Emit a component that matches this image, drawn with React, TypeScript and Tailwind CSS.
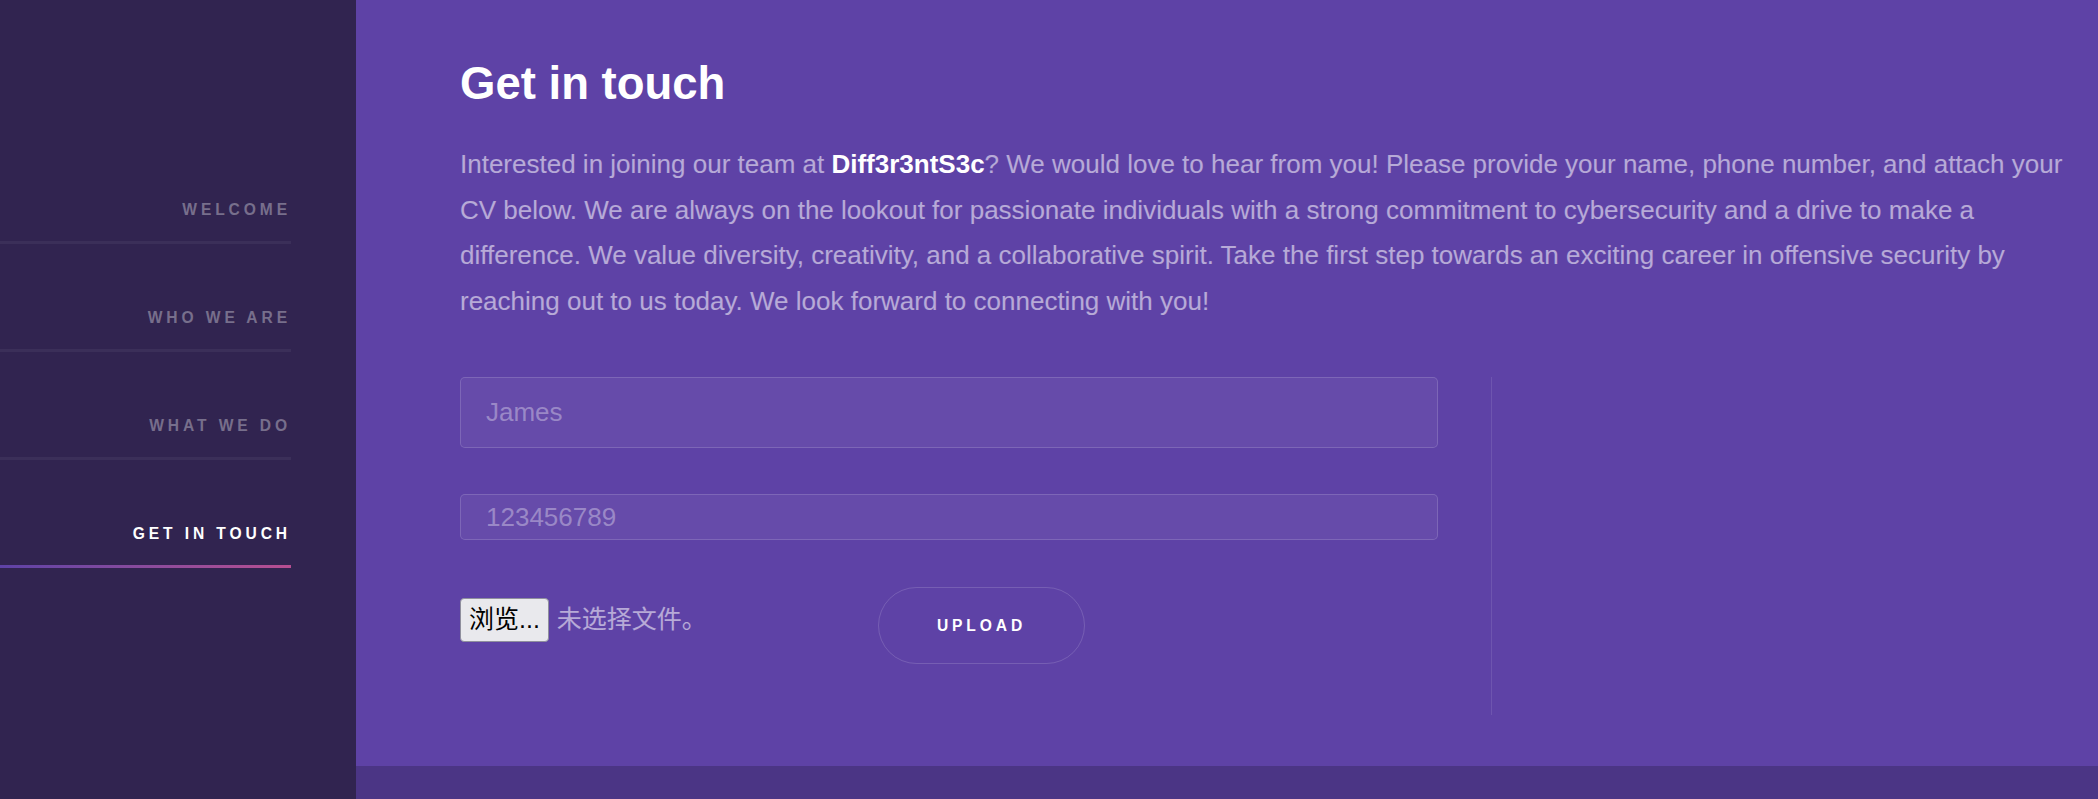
const navItems = [
  { label: "Welcome", active: false },
  { label: "Who we are", active: false },
  { label: "What we do", active: false },
  { label: "Get in touch", active: true },
];

function Sidebar() {
  return (
    <aside className="w-[356px] shrink-0 bg-[#312450] pt-[175px]">
      <nav>
        <ul className="flex flex-col gap-[39px]">
          {navItems.map((item) => (
            <li key={item.label} className="w-[291px]">
              <a
                href="#"
                className={
                  "block pt-[21px] text-right text-[15.6px] font-bold uppercase leading-[27px] tracking-[0.25em] " +
                  (item.active ? "text-white" : "text-white/35")
                }
              >
                {item.label}
              </a>
              <div
                className={
                  "mt-[18px] h-[3px] w-full " +
                  (item.active
                    ? "bg-gradient-to-r from-[#5e42a6] to-[#b74e91]"
                    : "bg-white/5")
                }
              />
            </li>
          ))}
        </ul>
      </nav>
    </aside>
  );
}

function ContactForm() {
  return (
    <div className="flex">
      <form className="w-[1032px] border-r border-white/10 pr-[53px] pb-[51px]">
        <input
          type="text"
          placeholder="James"
          className="block h-[71px] w-full rounded-[5px] border border-white/15 bg-white/5 px-[25px] text-[26px] text-white outline-none placeholder:text-white/35"
        />
        <input
          type="tel"
          placeholder="123456789"
          className="mt-[46px] block h-[46px] w-full rounded-[5px] border border-white/15 bg-white/5 px-[25px] text-[26px] text-white outline-none placeholder:text-white/35"
        />
        <div className="mt-[47px] flex items-start">
          <div className="mt-[11px] flex w-[418px] items-center gap-[8px] font-['Liberation_Sans','Noto_Sans_CJK_SC',sans-serif]">
            <span className="flex h-[44px] items-center rounded-[4px] border border-[#8f8f9d] bg-[#e9e9ed] px-[8px] text-[25px] text-black">
              浏览...
            </span>
            <span className="text-[25px] text-white/55">未选择文件。</span>
          </div>
          <button
            type="button"
            className="h-[77px] w-[207px] rounded-full border border-white/15 text-[15.6px] font-bold uppercase tracking-[0.25em] text-white"
          >
            Upload
          </button>
        </div>
      </form>
      <div className="flex-1" />
    </div>
  );
}

export default function App() {
  return (
    <div className="flex h-[799px] w-[2098px] overflow-hidden font-['Liberation_Sans',Arial,sans-serif]">
      <Sidebar />
      <main className="flex flex-1 flex-col">
        <section className="h-[766px] bg-[#5e42a6] pl-[104px] pr-[23px] pt-[50px]">
          <h2 className="mb-[24px] text-[45.5px] font-bold leading-[68px] text-white">
            Get in touch
          </h2>
          <p className="mb-[53px] text-[26px] leading-[45.5px] text-white/55">
            Interested in joining our team at{" "}
            <strong className="font-bold text-white">Diff3r3ntS3c</strong>? We
            would love to hear from you! Please provide your name, phone number,
            and attach your CV below. We are always on the lookout for
            passionate individuals with a strong commitment to cybersecurity and
            a drive to make a difference. We value diversity, creativity, and a
            collaborative spirit. Take the first step towards an exciting career
            in offensive security by reaching out to us today. We look forward to
            connecting with you!
          </p>
          <ContactForm />
        </section>
        <section className="flex-1 bg-[#4b3585]" />
      </main>
    </div>
  );
}
